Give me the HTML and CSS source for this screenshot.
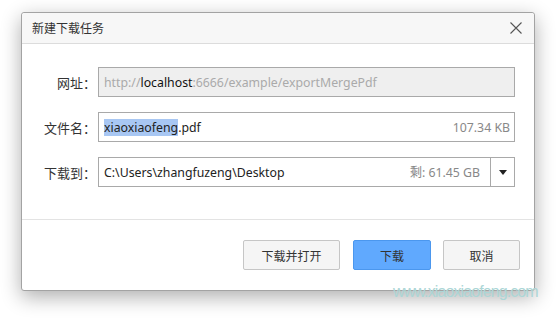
FILE: index.html
```html
<!DOCTYPE html>
<html lang="zh">
<head>
<meta charset="utf-8">
<title>新建下载任务</title>
<link rel="stylesheet" href="styles.css">
</head>
<body>
<div class="dialog">
  <div class="header">
    <span class="title">新建下载任务</span>
    <svg class="close" width="12" height="12" viewBox="0 0 12 12"><path d="M0.5 0.5 L11.5 11.5 M11.5 0.5 L0.5 11.5" stroke="#555" stroke-width="1.1" fill="none"/></svg>
  </div>
  <div class="body">
    <div class="row">
      <label class="label">网址：</label>
      <div class="field disabled"><span class="dim">http://</span><span class="host">localhost</span><span class="dim">:6666/example/exportMergePdf</span></div>
    </div>
    <div class="row">
      <label class="label">文件名：</label>
      <div class="field"><span class="name"><span class="sel">xiaoxiaofeng</span>.pdf</span><span class="meta">107.34 KB</span></div>
    </div>
    <div class="row">
      <label class="label">下载到：</label>
      <div class="field combo">
        <span class="name">C:\Users\zhangfuzeng\Desktop</span>
        <span class="meta">剩: 61.45 GB</span>
        <span class="drop"><svg width="8" height="5" viewBox="0 0 8 5"><path d="M0 0 H8 L4 5 Z" fill="#222"/></svg></span>
      </div>
    </div>
  </div>
  <div class="footer">
    <button class="btn wide">下载并打开</button>
    <button class="btn primary">下载</button>
    <button class="btn">取消</button>
  </div>
</div>
<div class="watermark">www.xiaoxiaofeng.com</div>
</body>
</html>
```
FILE: styles.css
```css
html, body {
  margin: 0;
  padding: 0;
  background: #fff;
}
body {
  font-family: "Noto Sans", "Noto Sans CJK SC", sans-serif;
  font-size: 12px;
  color: #333;
  padding: 12px 0 0 21px;
  height: 308px;
  overflow: hidden;
}
.dialog {
  width: 512px;
  height: 277px;
  border: 1px solid #a3a3a3;
  border-radius: 3px;
  background: #fff;
  box-shadow: 0 6px 20px rgba(0,0,0,0.32);
  display: flex;
  flex-direction: column;
}
.header {
  height: 30px;
  background: #f7f7f7;
  border-bottom: 1px solid #dcdcdc;
  border-radius: 3px 3px 0 0;
  display: flex;
  align-items: center;
  justify-content: space-between;
  padding: 0 12px 0 10px;
}
.title {
  font-size: 12px;
  color: #333;
}
.body {
  flex: 1;
  padding-top: 23px;
  display: flex;
  flex-direction: column;
  gap: 15px;
}
.row {
  display: flex;
  align-items: center;
  height: 30px;
}
.label {
  width: 74px;
  text-align: right;
  padding-right: 2px;
  color: #333;
  font-family: "Noto Sans CJK SC", sans-serif;
  font-size: 13px;
}
.field {
  box-sizing: border-box;
  width: 417px;
  height: 30px;
  border: 1px solid #a9a9a9;
  display: flex;
  align-items: center;
  padding: 0 4px 0 5px;
  background: #fff;
  font-size: 12.3px;
}
.field.disabled {
  background: #efefef;
}
.dim { color: #aaa; }
.host { color: #111; }
.name { flex: 1; color: #222; }
.sel { background: #a8c7f3; }
.meta { color: #888; }
.combo { padding-right: 0; }
.combo .meta { margin-right: 10px; }
.drop {
  width: 23px;
  height: 28px;
  border-left: 1px solid #a9a9a9;
  display: flex;
  align-items: center;
  justify-content: center;
}
.footer {
  height: 71px;
  border-top: 1px solid #e3e3e3;
  display: flex;
  justify-content: flex-end;
  align-items: flex-start;
  gap: 12px;
  padding: 20px 14px 0 0;
  box-sizing: border-box;
}
.btn {
  font-family: "Noto Sans CJK SC", sans-serif;
  font-size: 12px;
  color: #333;
  width: 77px;
  height: 30px;
  background: #f5f5f5;
  border: 1px solid #c6c6c6;
  border-radius: 2px;
  padding: 0;
}
.btn.wide { width: 97px; margin-right: 1px; }
.btn.primary {
  width: 78px;
  background: #60a9fe;
  border-color: #4b97ee;
}
.watermark {
  position: absolute;
  left: 393px;
  top: 283px;
  font-family: "Liberation Sans", Arial, sans-serif;
  font-size: 16px;
  letter-spacing: -0.9px;
  color: #acd6d6;
  white-space: nowrap;
}
```
